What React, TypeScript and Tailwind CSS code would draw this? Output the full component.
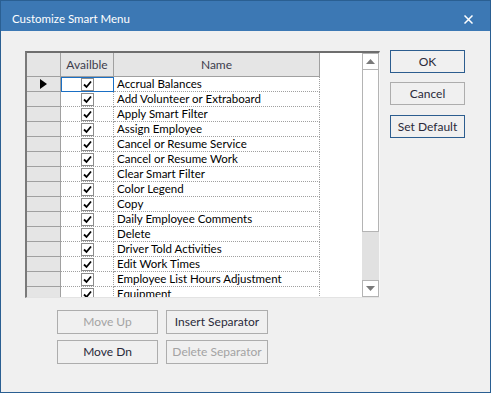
import React from "react";

const items = [
  "Accrual Balances",
  "Add Volunteer or Extraboard",
  "Apply Smart Filter",
  "Assign Employee",
  "Cancel or Resume Service",
  "Cancel or Resume Work",
  "Clear Smart Filter",
  "Color Legend",
  "Copy",
  "Daily Employee Comments",
  "Delete",
  "Driver Told Activities",
  "Edit Work Times",
  "Employee List Hours Adjustment",
  "Equipment",
];

function Check() {
  return (
    <div className="w-[13px] h-[13px] border border-[#8c8c8c] bg-white flex items-center justify-center">
      <svg width="9" height="9" viewBox="0 0 9 9">
        <path d="M1 4.5 L3.5 7 L8 1.5" stroke="#000" strokeWidth="1.8" fill="none" />
      </svg>
    </div>
  );
}

function Btn({ label, w, disabled, primary }: { label: string; w: string; disabled?: boolean; primary?: boolean }) {
  return (
    <div
      className={`${w} flex items-center justify-center border bg-[#f0f0f0] text-[12px] ${
        primary ? "border-[#2c5d8f]" : "border-[#adadad]"
      } ${disabled ? "text-[#a3a3a3]" : "text-[#2a2a3a]"}`}
    >
      {label}
    </div>
  );
}

export default function App() {
  return (
    <div
      className="w-[491px] h-[393px] flex flex-col bg-[#f0f0f0] border border-[#2a5f92] overflow-hidden"
      style={{ fontFamily: 'Lato, "Noto Sans", sans-serif' }}
    >
      <div className="h-[30px] bg-[#3c78b4] flex items-start justify-between pl-[11px] pr-[17px] pt-[8px] shrink-0">
        <span className="text-white text-[11.5px] leading-[20px]">Customize Smart Menu</span>
        <svg width="9" height="9" viewBox="0 0 9 9" className="mt-[6px]">
          <path d="M0.5 0.5 L8.5 8.5 M8.5 0.5 L0.5 8.5" stroke="#fff" strokeWidth="1.5" />
        </svg>
      </div>
      <div className="flex flex-col pl-[24px] pt-[20px]">
        <div className="flex items-start">
          {/* grid */}
          <div className="w-[355px] h-[247px] border-t-2 border-l-2 border-t-[#6e6e6e] border-l-[#7a7a7a] border-r border-b border-r-[#f7f7f7] border-b-[#e3e3e3] bg-white flex overflow-hidden">
            <div className="w-[335px] flex flex-col overflow-hidden">
              {/* header */}
              <div className="flex h-[24px] shrink-0">
                <div className="w-[34px] bg-[#e5e5e5] border-r border-b border-[#a0a0a0]" />
                <div className="w-[53px] bg-[#e5e5e5] border-r border-b border-[#a0a0a0] flex items-center justify-center text-[12px] text-[#3d3d4d]">
                  Availble
                </div>
                <div className="w-[206px] bg-[#e5e5e5] border-r border-b border-[#a0a0a0] flex items-center justify-center text-[12px] text-[#3d3d4d]">
                  Name
                </div>
                <div className="flex-1 bg-white" />
              </div>
              {items.map((name, i) => (
                <div key={name} className="flex h-[15px] shrink-0 overflow-hidden">
                  <div className="w-[34px] bg-[#e5e5e5] border-r border-b border-[#a0a0a0] flex items-center pl-[13px]">
                    {i === 0 && (
                      <svg width="7" height="10" viewBox="0 0 7 10">
                        <path d="M0 0 L7 5 L0 10 Z" fill="#000" />
                      </svg>
                    )}
                  </div>
                  <div
                    className={`w-[53px] flex justify-center ${
                      i === 0 ? "border border-[#1a6fc4]" : "border-r border-b border-dotted border-[#a0a0a0]"
                    }`}
                  >
                    <div className={i === 0 ? "mt-[0px]" : "mt-[1px]"}>
                      <Check />
                    </div>
                  </div>
                  <div className="w-[206px] border-r border-b border-dotted border-[#a0a0a0] pl-[3px] text-[11.5px] leading-[14px] text-black whitespace-nowrap overflow-hidden">
                    {name}
                  </div>
                  <div className="flex-1 bg-white" />
                </div>
              ))}
            </div>
            {/* scrollbar */}
            <div className="w-[17px] flex flex-col bg-[#e1e1e1] shrink-0">
              <div className="h-[17px] bg-white border border-[#b4b4b4] flex items-center justify-center shrink-0">
                <svg width="9" height="5" viewBox="0 0 9 5">
                  <path d="M0 5 L4.5 0 L9 5 Z" fill="#7a7a7a" />
                </svg>
              </div>
              <div className="h-[162px] bg-white border-x border-b border-[#b4b4b4] shrink-0" />
              <div className="flex-1" />
              <div className="h-[17px] bg-white border border-[#b4b4b4] flex items-center justify-center shrink-0">
                <svg width="9" height="5" viewBox="0 0 9 5">
                  <path d="M0 0 L9 0 L4.5 5 Z" fill="#7a7a7a" />
                </svg>
              </div>
            </div>
          </div>
          {/* right buttons */}
          <div className="flex flex-col ml-[10px] -mt-[1px] gap-[9px]">
            <Btn label="OK" w="w-[75px] h-[23px]" primary />
            <Btn label="Cancel" w="w-[75px] h-[23px]" />
            <div className="mt-[1px]">
              <Btn label="Set Default" w="w-[75px] h-[23px]" primary />
            </div>
          </div>
        </div>
        {/* bottom buttons */}
        <div className="grid grid-cols-[101px_102px] gap-x-[8px] gap-y-[6px] ml-[32px] mt-[12px]">
          <Btn label="Move Up" w="w-[101px] h-[24px]" disabled />
          <Btn label="Insert Separator" w="w-[102px] h-[24px]" />
          <Btn label="Move Dn" w="w-[101px] h-[24px]" />
          <Btn label="Delete Separator" w="w-[102px] h-[24px]" disabled />
        </div>
      </div>
    </div>
  );
}
